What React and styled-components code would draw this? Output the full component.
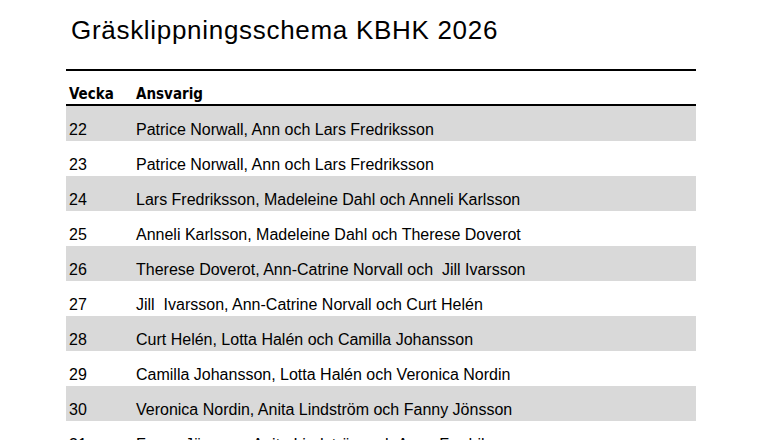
import React from 'react';
import styled, { createGlobalStyle } from 'styled-components';

const GlobalStyle = createGlobalStyle`
  body {
    margin: 0;
    background: #fff;
    color: #000;
    font-family: "Liberation Sans", Arial, sans-serif;
  }
`;

const Page = styled.div`
  width: 767px;
  height: 440px;
  overflow: hidden;
  padding-left: 66px;
  box-sizing: border-box;
`;

const Title = styled.h1`
  margin: 0;
  padding: 17px 0 0 5px;
  height: 69px;
  box-sizing: border-box;
  font-family: "Liberation Sans", Arial, sans-serif;
  font-weight: 400;
  font-size: 26px;
  line-height: 26px;
  letter-spacing: 0.7px;
`;

const Table = styled.div`
  width: 630px;
  border-top: 2px solid #000;
`;

const HeaderRow = styled.div`
  display: grid;
  grid-template-columns: 70px 1fr;
  height: 35px;
  align-items: end;
  border-bottom: 2px solid #000;
  box-sizing: border-box;
  font-family: "Liberation Sans Narrow", "DejaVu Sans Condensed", sans-serif;
  font-weight: 700;
  font-size: 15px;
  line-height: 16px;
  padding-bottom: 2px;
`;

const Row = styled.div`
  display: grid;
  grid-template-columns: 70px 1fr;
  height: 35px;
  box-sizing: border-box;
  padding-top: 16px;
  font-size: 16px;
  line-height: 16px;
  white-space: pre;
  background: ${(p) => (p.$shaded ? '#d9d9d9' : '#fff')};
`;

const Cell = styled.div`
  padding-left: ${(p) => (p.$first ? '3px' : '0')};
`;

const rows = [
  ['22', 'Patrice Norwall, Ann och Lars Fredriksson'],
  ['23', 'Patrice Norwall, Ann och Lars Fredriksson'],
  ['24', 'Lars Fredriksson, Madeleine Dahl och Anneli Karlsson'],
  ['25', 'Anneli Karlsson, Madeleine Dahl och Therese Doverot'],
  ['26', 'Therese Doverot, Ann-Catrine Norvall och  Jill Ivarsson'],
  ['27', 'Jill  Ivarsson, Ann-Catrine Norvall och Curt Helén'],
  ['28', 'Curt Helén, Lotta Halén och Camilla Johansson'],
  ['29', 'Camilla Johansson, Lotta Halén och Veronica Nordin'],
  ['30', 'Veronica Nordin, Anita Lindström och Fanny Jönsson'],
  ['31', 'Fanny Jönsson, Anita Lindström och Anna Fredriksson'],
];

const App = () => (
  <Page>
    <GlobalStyle />
    <Title>Gräsklippningsschema KBHK 2026</Title>
    <Table>
      <HeaderRow>
        <Cell $first>Vecka</Cell>
        <Cell>Ansvarig</Cell>
      </HeaderRow>
      {rows.map(([week, names], i) => (
        <Row key={week} $shaded={i % 2 === 0}>
          <Cell $first>{week}</Cell>
          <Cell>{names}</Cell>
        </Row>
      ))}
    </Table>
  </Page>
);

export default App;
